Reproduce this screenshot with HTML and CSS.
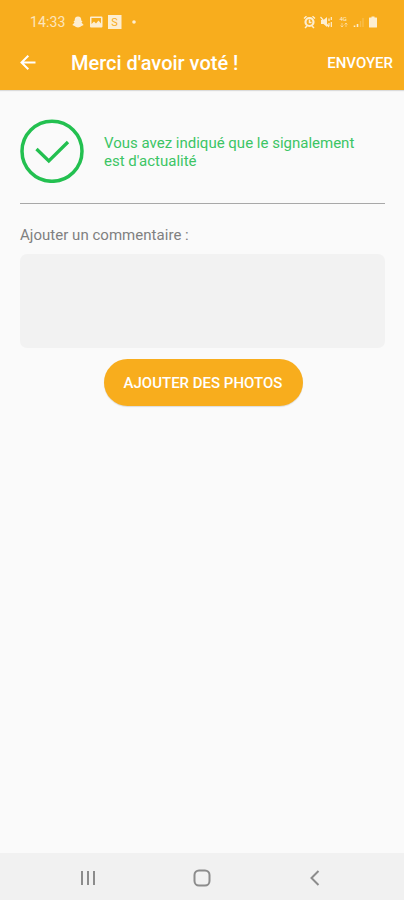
FILE: index.html
```html
<!DOCTYPE html>
<html lang="fr">
<head>
    <meta charset="UTF-8">
    <meta name="viewport" content="width=device-width, initial-scale=1.0">
    <title>Merci d'avoir voté !</title>
    <link rel="stylesheet" href="styles.css">
</head>
<body>
    <header class="header">
        <div class="status-bar">
            <span class="clock">14:33</span>
            <svg class="status-left" width="66" height="14" viewBox="0 0 66 14" fill="#fff">
                <path d="M6 1.500C3.600 1.500 2.600 3 2.700 5.500L1.500 6.500L2.500 7.500L.3 10L2.500 11L4 12L6 12.600L8 12L9.500 11L11.700 10L9.500 7.500L10.500 6.500L9.300 5.500C9.400 3 8.400 1.500 6 1.500Z"/>
                <path fill-rule="evenodd" d="M19 1.500H29.500Q30.500 1.500 30.500 2.500V11.500Q30.500 12.500 29.500 12.500H19Q18 12.500 18 11.500V2.500Q18 1.500 19 1.500ZM19.500 3V9L22 6.500L24 8.500L26.500 5.500L29 8.500V3Z"/>
                <rect x="36" y="0" width="13.500" height="14"/>
                <text class="app-letter" x="39.300" y="11">S</text>
                <circle cx="62" cy="7" r="1.800"/>
            </svg>
            <svg class="status-right" width="76" height="14" viewBox="0 0 76 14" fill="none" stroke="#fff">
                <circle cx="6.500" cy="7" r="4" stroke-width="2.200"/>
                <path d="M6.500 4.500V7.500H8.500M1 3.500L3.500 1.300M9.500 1.300L12 3.500M2 13L4 11M11 13L9 11" stroke-width="1.500"/>
                <path d="M18 5H20.500L24 2V12L20.500 9H18Z" fill="#fff" stroke="none"/>
                <path d="M17.500 2L26 12M26 3.500V6M26 8V11M28.300 2V5M28.300 7V12" stroke-width="1.200"/>
                <text class="network" x="36.500" y="6">4G</text>
                <path d="M39 8V12M37.500 10.500L39 12L40.500 10.500M43 12V8M41.500 9.500L43 8L44.500 9.500" opacity=".55"/>
                <path d="M51.500 12V10.500M54.500 12V9" stroke-width="1.600"/>
                <path d="M57.500 12V6M60 12V3" stroke-width="1.400" opacity=".25"/>
                <path d="M66.500 2.500H68.500V1.500H71.500V2.500H73.500Q74 2.500 74 3V12Q74 12.500 73.500 12.500H66.500Q66 12.500 66 12V3Q66 2.500 66.500 2.500Z" fill="#fff" stroke="none"/>
            </svg>
        </div>
        <div class="toolbar">
            <svg class="back-icon" width="16" height="16" viewBox="0 0 16 16" fill="none" stroke="#fff" stroke-width="2">
                <path d="M15.500 7.500H2M8.300 .7L1.500 7.500L8.300 14.300"/>
            </svg>
            <h1 class="title">Merci d'avoir voté !</h1>
            <button class="send-btn" type="button">ENVOYER</button>
        </div>
    </header>
    <main class="content">
        <div class="vote-result">
            <svg class="check-icon" width="64" height="64" viewBox="0 0 64 64" fill="none" stroke="#23c050">
                <circle cx="32" cy="32.300" r="30" stroke-width="3.500"/>
                <path d="M16.500 30L28.800 42L48 23" stroke-width="3.300"/>
            </svg>
            <p class="vote-text">Vous avez indiqué que le signalement est d'actualité</p>
        </div>
        <form class="comment-form">
            <label class="comment-label" for="comment">Ajouter un commentaire :</label>
            <textarea class="comment" id="comment" name="comment"></textarea>
            <button class="photo-btn" type="button">AJOUTER DES PHOTOS</button>
        </form>
    </main>
    <nav class="nav-bar">
        <svg width="18" height="18" viewBox="0 0 18 18" fill="none" stroke="#8c8c8c" stroke-width="2">
            <path d="M3 2V16M9 2V16M15 2V16"/>
        </svg>
        <svg width="18" height="18" viewBox="0 0 18 18" fill="none" stroke="#8c8c8c" stroke-width="2">
            <rect x="1.500" y="1.500" width="15" height="15" rx="4.500"/>
        </svg>
        <svg width="18" height="18" viewBox="0 0 18 18" fill="none" stroke="#8c8c8c" stroke-width="2">
            <path d="M12.500 2L5.500 9L12.500 16"/>
        </svg>
    </nav>
</body>
</html>
```
FILE: styles.css
```css
* {
    box-sizing: border-box;
}
body {
    font-family: Roboto, "Liberation Sans", sans-serif;
    background-color: #fafafa;
    margin: 0;
    height: 900px;
    display: flex;
    flex-direction: column;
}
button {
    font-family: inherit;
    border: none;
    padding: 0;
    cursor: pointer;
}
.header {
    height: 90px;
    background-color: #f8ad1d;
    color: #fff;
    box-shadow: 0 1px 1px rgba(0, 0, 0, 0.12);
}
.status-bar {
    height: 36px;
    padding: 7px 28px 0 30px;
    display: flex;
    align-items: center;
}
.clock {
    width: 42px;
    font-size: 14px;
    letter-spacing: 0.1px;
    opacity: 0.7;
}
.status-left {
    opacity: 0.8;
}
.status-right {
    margin-left: auto;
    margin-right: -3px;
    opacity: 0.8;
}
.app-letter {
    font-size: 11px;
    fill: #f8ad1d;
}
.network {
    font-size: 6px;
    fill: #fff;
    stroke: none;
}
.toolbar {
    height: 54px;
    padding: 0 11px 0 20px;
    display: flex;
    align-items: center;
}
.title {
    margin: 0 0 0 35px;
    font-size: 20px;
    font-weight: 500;
}
.send-btn {
    margin-left: auto;
    background: none;
    color: #fff;
    font-size: 15px;
    font-weight: 500;
}
.content {
    flex: 1;
    padding: 29px 19px 0 20px;
}
.vote-result {
    height: 85px;
    display: flex;
    align-items: flex-start;
    border-bottom: 1px solid #a8a8a8;
}
.vote-text {
    margin: 16px 0 0 20px;
    width: 265px;
    color: #3cc565;
    font-size: 15px;
    line-height: 17.5px;
}
.comment-form {
    display: flex;
    flex-direction: column;
}
.comment-label {
    margin-top: 22px;
    color: #808080;
    font-size: 15px;
    line-height: 18px;
    letter-spacing: 0.03px;
}
.comment {
    margin-top: 10px;
    height: 94px;
    padding: 10px;
    border: none;
    border-radius: 7px;
    background-color: #f2f2f2;
    font-family: inherit;
    resize: none;
}
.photo-btn {
    align-self: center;
    margin-top: 11px;
    margin-left: 1px;
    width: 199px;
    height: 47px;
    border-radius: 24px;
    background-color: #f8ad1d;
    box-shadow: 0 1px 1px rgba(0, 0, 0, 0.12);
    color: #fff;
    font-size: 15px;
    font-weight: 500;
}
.nav-bar {
    height: 47px;
    padding: 3px 80px 0 79px;
    display: flex;
    align-items: center;
    justify-content: space-between;
    background-color: #f1f1f1;
}
```
